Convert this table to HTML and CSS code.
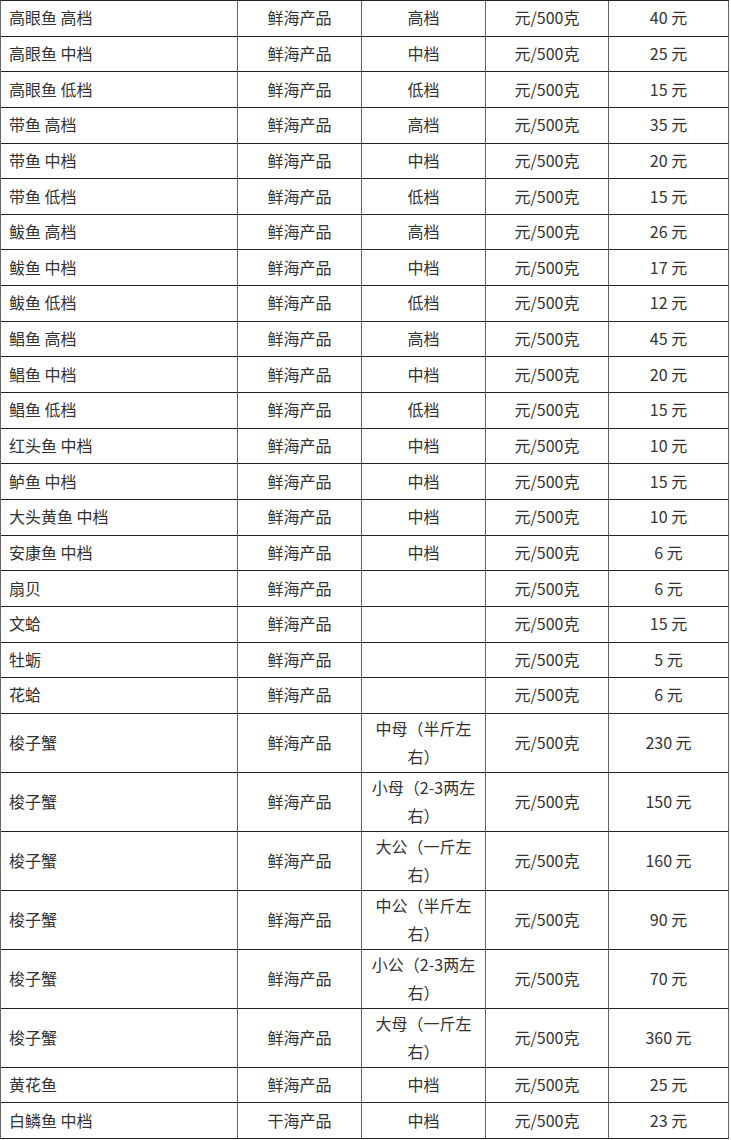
FILE: index.html
```html
<!DOCTYPE html>
<html lang="zh-CN">
<head>
<meta charset="utf-8">
<title>价格表</title>
<link rel="stylesheet" href="styles.css">
</head>
<body>
<div class="table">
  <div class="c name">高眼鱼 高档</div><div class="c">鲜海产品</div><div class="c">高档</div><div class="c">元/500克</div><div class="c">40 元</div>
  <div class="c name">高眼鱼 中档</div><div class="c">鲜海产品</div><div class="c">中档</div><div class="c">元/500克</div><div class="c">25 元</div>
  <div class="c name">高眼鱼 低档</div><div class="c">鲜海产品</div><div class="c">低档</div><div class="c">元/500克</div><div class="c">15 元</div>
  <div class="c name">带鱼 高档</div><div class="c">鲜海产品</div><div class="c">高档</div><div class="c">元/500克</div><div class="c">35 元</div>
  <div class="c name">带鱼 中档</div><div class="c">鲜海产品</div><div class="c">中档</div><div class="c">元/500克</div><div class="c">20 元</div>
  <div class="c name">带鱼 低档</div><div class="c">鲜海产品</div><div class="c">低档</div><div class="c">元/500克</div><div class="c">15 元</div>
  <div class="c name">鲅鱼 高档</div><div class="c">鲜海产品</div><div class="c">高档</div><div class="c">元/500克</div><div class="c">26 元</div>
  <div class="c name">鲅鱼 中档</div><div class="c">鲜海产品</div><div class="c">中档</div><div class="c">元/500克</div><div class="c">17 元</div>
  <div class="c name">鲅鱼 低档</div><div class="c">鲜海产品</div><div class="c">低档</div><div class="c">元/500克</div><div class="c">12 元</div>
  <div class="c name">鲳鱼 高档</div><div class="c">鲜海产品</div><div class="c">高档</div><div class="c">元/500克</div><div class="c">45 元</div>
  <div class="c name">鲳鱼 中档</div><div class="c">鲜海产品</div><div class="c">中档</div><div class="c">元/500克</div><div class="c">20 元</div>
  <div class="c name">鲳鱼 低档</div><div class="c">鲜海产品</div><div class="c">低档</div><div class="c">元/500克</div><div class="c">15 元</div>
  <div class="c name">红头鱼 中档</div><div class="c">鲜海产品</div><div class="c">中档</div><div class="c">元/500克</div><div class="c">10 元</div>
  <div class="c name">鲈鱼 中档</div><div class="c">鲜海产品</div><div class="c">中档</div><div class="c">元/500克</div><div class="c">15 元</div>
  <div class="c name">大头黄鱼 中档</div><div class="c">鲜海产品</div><div class="c">中档</div><div class="c">元/500克</div><div class="c">10 元</div>
  <div class="c name">安康鱼 中档</div><div class="c">鲜海产品</div><div class="c">中档</div><div class="c">元/500克</div><div class="c">6 元</div>
  <div class="c name">扇贝</div><div class="c">鲜海产品</div><div class="c"></div><div class="c">元/500克</div><div class="c">6 元</div>
  <div class="c name">文蛤</div><div class="c">鲜海产品</div><div class="c"></div><div class="c">元/500克</div><div class="c">15 元</div>
  <div class="c name">牡蛎</div><div class="c">鲜海产品</div><div class="c"></div><div class="c">元/500克</div><div class="c">5 元</div>
  <div class="c name">花蛤</div><div class="c">鲜海产品</div><div class="c"></div><div class="c">元/500克</div><div class="c">6 元</div>
  <div class="c name">梭子蟹</div><div class="c">鲜海产品</div><div class="c">中母（半斤左右）</div><div class="c">元/500克</div><div class="c">230 元</div>
  <div class="c name">梭子蟹</div><div class="c">鲜海产品</div><div class="c">小母（2-3两左右）</div><div class="c">元/500克</div><div class="c">150 元</div>
  <div class="c name">梭子蟹</div><div class="c">鲜海产品</div><div class="c">大公（一斤左右）</div><div class="c">元/500克</div><div class="c">160 元</div>
  <div class="c name">梭子蟹</div><div class="c">鲜海产品</div><div class="c">中公（半斤左右）</div><div class="c">元/500克</div><div class="c">90 元</div>
  <div class="c name">梭子蟹</div><div class="c">鲜海产品</div><div class="c">小公（2-3两左右）</div><div class="c">元/500克</div><div class="c">70 元</div>
  <div class="c name">梭子蟹</div><div class="c">鲜海产品</div><div class="c">大母（一斤左右）</div><div class="c">元/500克</div><div class="c">360 元</div>
  <div class="c name">黄花鱼</div><div class="c">鲜海产品</div><div class="c">中档</div><div class="c">元/500克</div><div class="c">25 元</div>
  <div class="c name">白鳞鱼 中档</div><div class="c">干海产品</div><div class="c">中档</div><div class="c">元/500克</div><div class="c">23 元</div>
</div>
</body>
</html>
```

FILE: styles.css
```css
html, body {
  margin: 0;
  padding: 0;
  background: #ffffff;
}

body {
  font-family: "Noto Sans CJK SC", "Noto Sans", sans-serif;
  font-size: 16px;
  color: #333333;
}

.table {
  display: grid;
  grid-template-columns: 237px 124px 124px 123px 120px;
  width: max-content;
  border-top: 1px solid #222222;
  border-left: 1px solid #666666;
}

.c {
  box-sizing: border-box;
  min-height: 35.65px;
  display: flex;
  align-items: center;
  justify-content: center;
  text-align: center;
  padding: 0 8px 2px;
  line-height: 28px;
  border-right: 1px solid #666666;
  border-bottom: 1px solid #222222;
}

.c.name {
  justify-content: flex-start;
  text-align: left;
}
```
